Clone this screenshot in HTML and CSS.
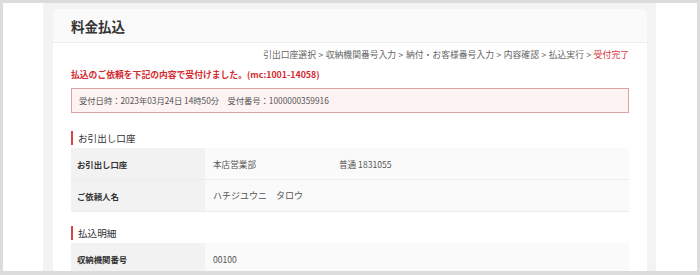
FILE: index.html
```html
<!DOCTYPE html>
<html lang="ja">
<head>
    <meta charset="UTF-8">
    <title>料金払込</title>
    <link rel="stylesheet" href="styles.css">
</head>
<body>
    <div class="frame">
        <div class="panel">
            <div class="card">
                <div class="card-head">
                    <h1>料金払込</h1>
                </div>
                <div class="card-body">
                    <p class="steps">
                        引出口座選択 &gt; 収納機関番号入力 &gt; 納付・お客様番号入力 &gt; 内容確認 &gt; 払込実行 &gt; <span class="current">受付完了</span>
                    </p>
                    <p class="done">払込のご依頼を下記の内容で受付けました。(mc:1001-14058)</p>
                    <div class="receipt">受付日時：2023年03月24日 14時50分　受付番号：1000000359916</div>

                    <h2 class="section">お引出し口座</h2>
                    <div class="detail">
                        <div class="row">
                            <div class="label">お引出し口座</div>
                            <div class="value">
                                <span class="branch">本店営業部</span>
                                <span>普通 1831055</span>
                            </div>
                        </div>
                        <div class="row">
                            <div class="label">ご依頼人名</div>
                            <div class="value name">ハチジユウニ　タロウ</div>
                        </div>
                    </div>

                    <h2 class="section next">払込明細</h2>
                    <div class="detail">
                        <div class="row">
                            <div class="label">収納機関番号</div>
                            <div class="value">00100</div>
                        </div>
                    </div>
                </div>
            </div>
        </div>
    </div>
</body>
</html>
```

FILE: styles.css
```css
body {
    margin: 0;
    font-family: "Noto Sans CJK JP", "Noto Sans", sans-serif;
    color: #333;
}
.frame {
    width: 700px;
    height: 275px;
    box-sizing: border-box;
    border: 3px solid #dcdcdc;
    border-bottom-width: 4px;
    background-color: #fff;
    overflow: hidden;
}
.panel {
    margin-left: 40px;
    width: 613px;
    height: 100%;
    box-sizing: border-box;
    padding: 6px 9px 0 10px;
    background-color: #f3f3f3;
}
.card {
    background-color: #fff;
    border-radius: 6px 6px 0 0;
    height: 300px;
}
.card-head {
    height: 33px;
    display: flex;
    align-items: center;
    padding: 0 18px;
    background-color: #fafafa;
    border-bottom: 1px solid #ececec;
    border-radius: 6px 6px 0 0;
}
.card-head h1 {
    margin: 0;
    font-size: 13.5px;
    font-weight: bold;
    color: #333;
}
.card-body {
    padding: 0 18px;
}
.steps {
    margin: 5px 0 0;
    line-height: 14px;
    font-size: 8.8px;
    color: #666;
    text-align: right;
    word-spacing: 0.5px;
}
.steps .current {
    color: #d9343a;
}
.done {
    margin: 6px 0 0;
    line-height: 14px;
    font-size: 8.8px;
    font-weight: bold;
    color: #d42a2e;
}
.receipt {
    margin-top: 6px;
    height: 25px;
    box-sizing: border-box;
    padding: 0 7px;
    line-height: 23px;
    font-size: 8.3px;
    color: #555;
    background-color: #fdf3f3;
    border: 1px solid #dba3a3;
}
.section {
    margin: 18px 0 3px;
    height: 14px;
    line-height: 14px;
    padding-left: 5px;
    border-left: 2px solid #d9434a;
    font-size: 9.6px;
    font-weight: normal;
    color: #333;
}
.section.next {
    margin-top: 14px;
}
.detail {
    display: flex;
    flex-direction: column;
}
.row {
    display: grid;
    grid-template-columns: 134px 1fr;
    height: 31px;
    border-bottom: 1px solid #eeeeee;
}
.label {
    display: flex;
    align-items: center;
    padding: 0 6px;
    background-color: #f2f2f2;
    font-size: 8.4px;
    font-weight: bold;
    color: #333;
}
.value {
    display: flex;
    align-items: center;
    padding: 0 8px;
    background-color: #fafafa;
    font-size: 8.6px;
    color: #555;
}
.value.name {
    font-size: 9px;
}
.branch {
    width: 126px;
}
```
